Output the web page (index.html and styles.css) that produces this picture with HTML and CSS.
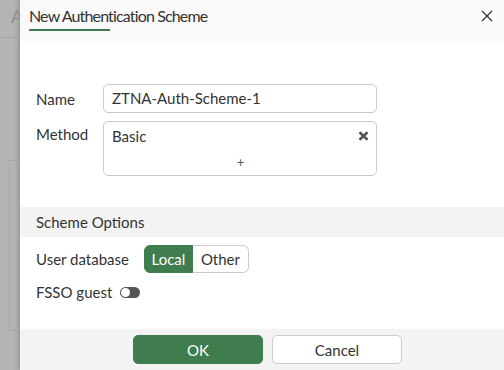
FILE: index.html
```html
<!DOCTYPE html>
<html>
<head>
<meta charset="utf-8">
<link rel="stylesheet" href="styles.css">
</head>
<body>
<div class="page">
  <div class="behind">
    <div class="behind-title">A</div>
    <div class="behind-line"></div>
    <div class="behind-field f1"></div>
    <div class="behind-field f2"></div>
    <div class="behind-panel"></div>
  </div>
  <div class="dialog">
    <div class="dlg-header">
      <div class="dlg-title">New Authentication Scheme</div>
      <svg class="close" width="12" height="12" viewBox="0 0 12 12"><path d="M1 1L11 11M11 1L1 11" stroke="#333" stroke-width="1.3" fill="none"/></svg>
    </div>
    <div class="dlg-body">
      <div class="form">
        <div class="row">
          <label class="lbl">Name</label>
          <div class="input">ZTNA-Auth-Scheme-1</div>
        </div>
        <div class="row top">
          <label class="lbl lbl-top">Method</label>
          <div class="multi">
            <div class="chip-row">
              <span class="chip">Basic</span>
              <svg class="remove" width="11" height="10" viewBox="0 0 11 10"><path d="M1.5 1.2L9.5 8.8M9.5 1.2L1.5 8.8" stroke="#555" stroke-width="2.6" fill="none"/></svg>
            </div>
            <div class="add">+</div>
          </div>
        </div>
      </div>
      <div class="section">Scheme Options</div>
      <div class="options">
        <div class="opt-row">
          <span class="lbl-inline">User database</span>
          <div class="seg">
            <span class="seg-btn active">Local</span>
            <span class="seg-btn">Other</span>
          </div>
        </div>
        <div class="opt-row fsso">
          <span class="lbl-inline">FSSO guest</span>
          <span class="switch"><span class="knob"></span></span>
        </div>
      </div>
    </div>
    <div class="dlg-footer">
      <button class="btn primary">OK</button>
      <button class="btn">Cancel</button>
    </div>
  </div>
</div>
</body>
</html>
```
FILE: styles.css
```css
* { box-sizing: border-box; }
html, body { margin: 0; padding: 0; }
body {
  font-family: Lato, "Open Sans", sans-serif;
  color: #333;
  font-size: 15px;
}
.page {
  width: 504px;
  height: 370px;
  display: flex;
  overflow: hidden;
  background: #b4b4b4;
}
.behind {
  width: 20px;
  flex: none;
  position: relative;
  overflow: hidden;
}
.behind-title {
  position: absolute;
  left: 11px;
  top: 5px;
  font-size: 18px;
  color: #8e8e8e;
}
.behind-line {
  position: absolute;
  left: 0; right: 0; top: 37px;
  border-top: 1px solid #a8a8a8;
}
.behind-field {
  position: absolute;
  left: 17px;
  width: 40px;
  border: 1px solid #a3a3a3;
  border-radius: 4px;
}
.f1 { top: 53px; height: 28px; }
.f2 { top: 98px; height: 22px; }
.behind-panel {
  position: absolute;
  left: 9px; top: 160px;
  width: 40px; height: 171px;
  border: 1px solid #a6a6a6;
}
.dialog {
  flex: 1;
  display: flex;
  flex-direction: column;
  background: #fff;
  box-shadow: -2px 0 4px rgba(0,0,0,0.18);
}
.dlg-header {
  height: 41px;
  background: #f9f9f9;
  display: flex;
  align-items: flex-start;
  justify-content: space-between;
  padding: 0 9px 0 9px;
}
.dlg-title {
  font-size: 16px;
  letter-spacing: -0.85px;
  line-height: 20px;
  padding-top: 6px;
  padding-bottom: 3px;
  border-bottom: 2px solid #3f7d4f;
  width: 81px;
  white-space: nowrap;
  color: #333;
}
.close { margin-top: 10px; margin-right: 2px; }
.dlg-body {
  flex: 1;
  display: flex;
  flex-direction: column;
}
.form {
  padding: 43px 0 0 16px;
  display: flex;
  flex-direction: column;
  gap: 8px;
}
.row { display: flex; align-items: center; }
.row.top { align-items: flex-start; }
.lbl { width: 67px; flex: none; }
.lbl-top { padding-top: 4px; }
.input {
  width: 274px;
  height: 29px;
  border: 1px solid #ccc;
  border-radius: 5px;
  padding: 0 8px;
  line-height: 27px;
}
.multi {
  width: 274px;
  height: 55px;
  border: 1px solid #ccc;
  border-radius: 5px;
  padding: 3px 7px 0 8px;
  display: flex;
  flex-direction: column;
}
.chip-row {
  display: flex;
  justify-content: space-between;
  align-items: center;
  height: 21px;
}
.add {
  text-align: center;
  font-size: 13px;
  color: #555;
  margin-top: 6px;
  line-height: 20px;
}
.section {
  margin-top: 31px;
  height: 30px;
  background: #f3f3f3;
  padding-left: 16px;
  line-height: 30px;
}
.options {
  padding: 8px 0 0 16px;
  display: flex;
  flex-direction: column;
  gap: 5px;
}
.opt-row {
  display: flex;
  align-items: center;
  gap: 15px;
}
.fsso { gap: 8px; height: 28px; }
.seg { display: flex; height: 28px; }
.seg-btn {
  display: flex;
  align-items: center;
  justify-content: center;
  border: 1px solid #ccc;
  border-left: none;
  border-radius: 0 6px 6px 0;
  width: 56px;
  color: #333;
}
.seg-btn.active {
  width: 49px;
  background: #3f7d4f;
  border: 1px solid #3f7d4f;
  border-radius: 6px 0 0 6px;
  color: #fff;
}
.switch {
  width: 20px;
  height: 11px;
  background: #555;
  border-radius: 6px;
  display: flex;
  align-items: center;
  padding: 0 1px;
}
.knob {
  width: 9px;
  height: 9px;
  border-radius: 50%;
  background: #fff;
}
.dlg-footer {
  height: 41px;
  background: #f3f3f3;
  display: flex;
  align-items: center;
  justify-content: center;
  gap: 9px;
  padding-left: 11px;
}
.btn {
  width: 130px;
  height: 29px;
  border: 1px solid #ccc;
  border-radius: 5px;
  background: #fff;
  font-family: Lato, "Open Sans", sans-serif;
  font-size: 15px;
  color: #333;
  padding: 0;
}
.btn.primary {
  background: #3f7d4f;
  border-color: #3f7d4f;
  color: #fff;
}
```
